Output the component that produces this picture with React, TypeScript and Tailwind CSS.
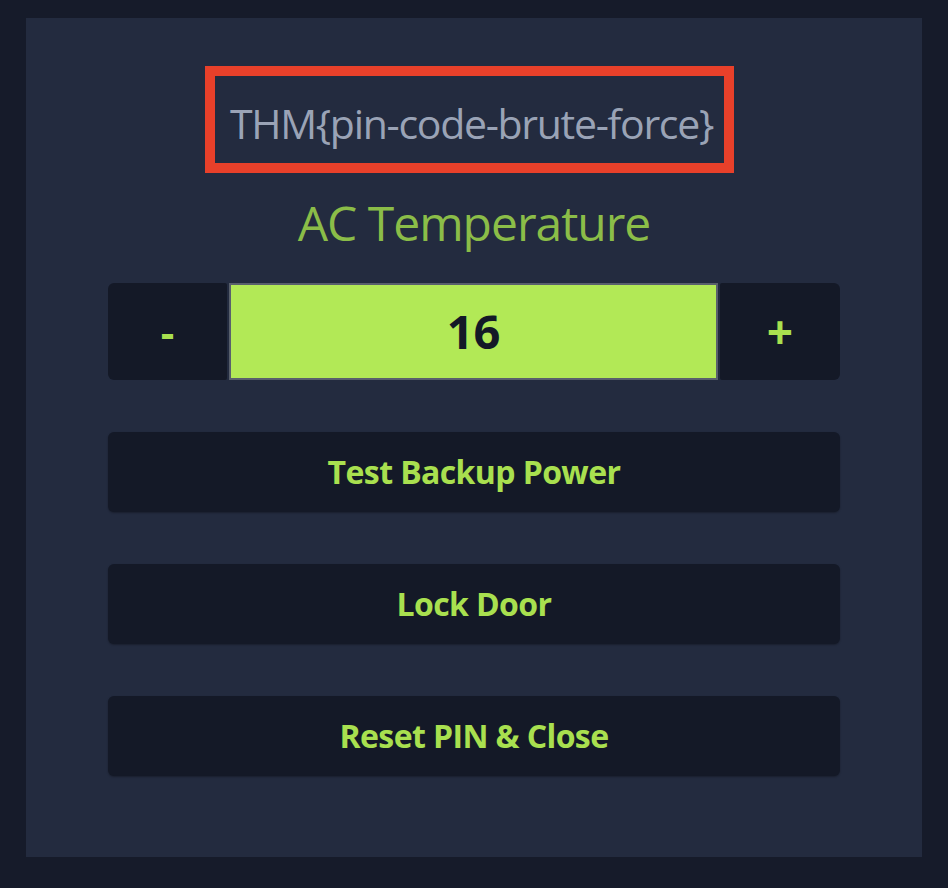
import React, { useState } from 'react';

const font = { fontFamily: '"Open Sans", "Noto Sans", sans-serif' };

function ActionButton({ label }: { label: string }) {
  return (
    <button className="w-full h-[80px] rounded-[6px] bg-[#141927] text-[#a9e04f] text-[32px] font-bold tracking-[-0.6px] shadow-[0_1px_2px_rgba(0,0,0,0.3)]">
      {label}
    </button>
  );
}

export default function App() {
  const [temp, setTemp] = useState(16);

  return (
    <div className="min-h-[888px] bg-[#161b2a] px-[26px] pt-[18px] pb-[31px]" style={font}>
      <div className="h-[839px] bg-[#232b3f] flex flex-col items-center pt-[48px]">
        <div className="mr-[9px] w-[529px] h-[107px] border-[10px] border-[#e8402a] flex items-center justify-center pt-[8px] pl-[4px]">
          <span className="text-[#9aa3b6] text-[41px] tracking-[-1.3px] leading-none">THM{'{'}pin-code-brute-force{'}'}</span>
        </div>

        <h2 className="mt-[20px] text-[#8bbd48] text-[48px] tracking-[-1px] leading-[60px]">AC Temperature</h2>

        <div className="mt-[30px] w-[732px] h-[97px] flex gap-[2px]">
          <button
            onClick={() => setTemp(temp - 1)}
            className="w-[119px] rounded-l-[6px] rounded-r-[2px] bg-[#141927] text-[#a9e04f] text-[42px] font-bold"
          >
            -
          </button>
          <div className="flex-1 bg-[#b2e956] border-2 border-[#59606c] flex items-center justify-center text-[#141927] text-[47px] font-bold">
            {temp}
          </div>
          <button
            onClick={() => setTemp(temp + 1)}
            className="w-[120px] rounded-r-[6px] rounded-l-[2px] bg-[#141927] text-[#a9e04f] text-[46px] font-bold"
          >
            +
          </button>
        </div>

        <div className="mt-[52px] w-[732px] flex flex-col gap-[52px]">
          <ActionButton label="Test Backup Power" />
          <ActionButton label="Lock Door" />
          <ActionButton label="Reset PIN & Close" />
        </div>
      </div>
    </div>
  );
}
